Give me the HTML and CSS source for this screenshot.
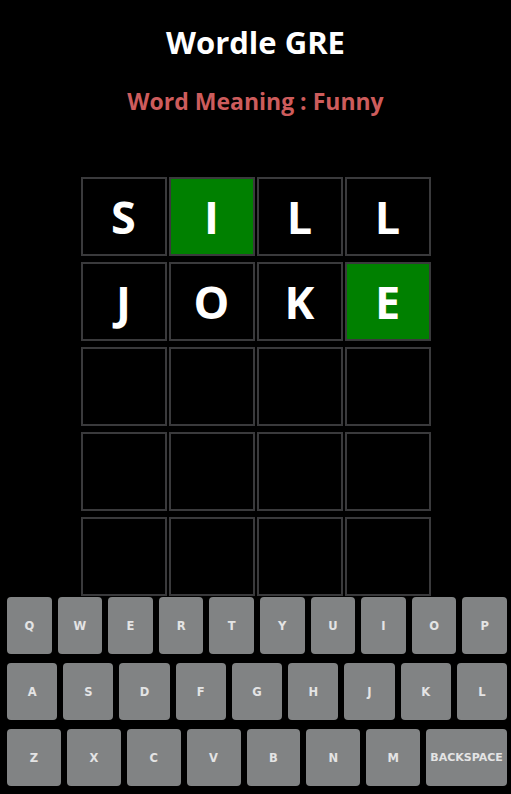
FILE: index.html
```html
<!DOCTYPE html>
<html lang="en">
<head>
<meta charset="utf-8">
<title>Wordle GRE</title>
<link rel="stylesheet" href="styles.css">
</head>
<body>
<div class="app">
  <h1 class="title">Wordle GRE</h1>
  <h2 class="meaning">Word Meaning : Funny</h2>
  <div class="board">
    <div class="tile">S</div><div class="tile correct">I</div><div class="tile">L</div><div class="tile">L</div>
    <div class="tile">J</div><div class="tile">O</div><div class="tile">K</div><div class="tile correct">E</div>
    <div class="tile"></div><div class="tile"></div><div class="tile"></div><div class="tile"></div>
    <div class="tile"></div><div class="tile"></div><div class="tile"></div><div class="tile"></div>
    <div class="tile"></div><div class="tile"></div><div class="tile"></div><div class="tile"></div>
  </div>
  <div class="keyboard">
    <div class="key-row">
      <button class="key">Q</button><button class="key">W</button><button class="key">E</button><button class="key">R</button><button class="key">T</button><button class="key">Y</button><button class="key">U</button><button class="key">I</button><button class="key">O</button><button class="key">P</button>
    </div>
    <div class="key-row">
      <button class="key">A</button><button class="key">S</button><button class="key">D</button><button class="key">F</button><button class="key">G</button><button class="key">H</button><button class="key">J</button><button class="key">K</button><button class="key">L</button>
    </div>
    <div class="key-row">
      <button class="key">Z</button><button class="key">X</button><button class="key">C</button><button class="key">V</button><button class="key">B</button><button class="key">N</button><button class="key">M</button><button class="key wide">BACKSPACE</button>
    </div>
  </div>
</div>
</body>
</html>
```
FILE: styles.css
```css
html, body {
  margin: 0;
  padding: 0;
  background: #000;
}

.app {
  display: flex;
  flex-direction: column;
  align-items: center;
  font-family: "Open Sans", "Noto Sans", sans-serif;
  color: #fff;
}

.title {
  margin: 22px 0 0;
  font-size: 31px;
  line-height: 40px;
  font-weight: 700;
}

.meaning {
  margin: 24px 0 0;
  font-size: 23px;
  line-height: 30px;
  font-weight: 700;
  color: #cd5c5c;
}

.board {
  margin-top: 61px;
  display: grid;
  grid-template-columns: repeat(4, 86px);
  grid-auto-rows: 79px;
  column-gap: 2px;
  row-gap: 6px;
}

.tile {
  box-sizing: border-box;
  border: 2px solid #3a3a3c;
  display: flex;
  align-items: center;
  justify-content: center;
  font-size: 45px;
  font-weight: 700;
  color: #fff;
  background: #000;
}

.tile.correct {
  background: #008000;
}

.keyboard {
  align-self: stretch;
  margin-top: 1px;
  padding: 0 4px 0 7px;
  display: flex;
  flex-direction: column;
  gap: 9px;
}

.key-row {
  display: flex;
  gap: 6px;
}

.key {
  flex: 1;
  height: 57px;
  border: 0;
  border-radius: 4px;
  background: #818384;
  color: #e4e4e4;
  font-family: "DejaVu Sans", Verdana, sans-serif;
  font-weight: 700;
  font-size: 11.5px;
  padding: 0;
}

.key.wide {
  flex: 1.5;
  font-size: 11px;
}
```
